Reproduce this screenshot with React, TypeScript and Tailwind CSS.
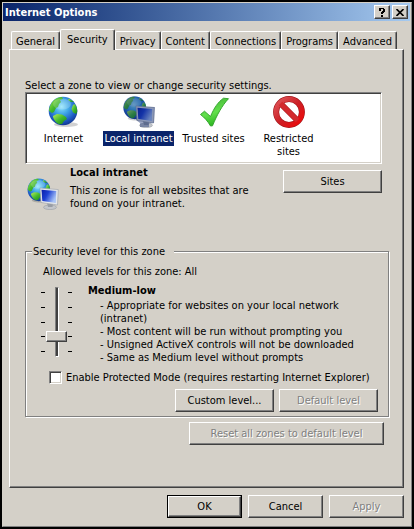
import { useState } from 'react';
import type { ButtonHTMLAttributes, ReactNode } from 'react';

const raised =
  'border border-t-white border-l-white border-r-[#404040] border-b-[#404040] shadow-[inset_-1px_-1px_0_#808080] bg-[#d4d0c8]';

function Button({
  className = '',
  primary = false,
  children,
  ...rest
}: ButtonHTMLAttributes<HTMLButtonElement> & { primary?: boolean; children: ReactNode }) {
  const face = `${raised} flex h-full w-full items-center justify-center`;
  return (
    <button
      type="button"
      className={`h-[23px] shrink-0 whitespace-nowrap disabled:text-[#808080] disabled:[text-shadow:1px_1px_0_#fff] ${
        primary ? 'border border-black' : ''
      } ${className}`}
      {...rest}
    >
      <span className={face}>{children}</span>
    </button>
  );
}

function Globe({ id }: { id: string }) {
  return (
    <g>
      <defs>
        <radialGradient id={`${id}-sea`} cx="0.45" cy="0.35" r="0.65">
          <stop offset="0" stopColor="#8fe4fb" />
          <stop offset="0.4" stopColor="#3fa6e6" />
          <stop offset="0.8" stopColor="#1c56c0" />
          <stop offset="1" stopColor="#123a94" />
        </radialGradient>
        <linearGradient id={`${id}-land`} x1="0" y1="0" x2="1" y2="1">
          <stop offset="0" stopColor="#b4ee5a" />
          <stop offset="0.5" stopColor="#43b92c" />
          <stop offset="1" stopColor="#15801c" />
        </linearGradient>
      </defs>
      <ellipse cx="18" cy="28.5" rx="12" ry="2.5" fill="#000" opacity="0.18" />
      <circle cx="15" cy="15" r="14.3" fill={`url(#${id}-sea)`} />
      <g fill={`url(#${id}-land)`}>
        <path d="M3 8 C6 3 10 1 14 1 L15 3 L12 4 L13 6 L11 8 L10 11 L8 12 L6 16 L4 17 L1 15 C1 12 2 10 3 8Z" />
        <path d="M5 20 L9 18 L14 18.5 L18 21 L19 23 L16 25 L14 28 L11 28.3 C8 27 6 24 5 21Z" />
        <path d="M25 9 L26.5 8 C28.5 10 29.5 13 29.2 16 L28 18 L25 16.5 L23.5 13Z" />
        <path d="M21 2.5 L26 6 L23 6 L20 4Z" />
      </g>
      <ellipse cx="14" cy="8" rx="9" ry="5.5" fill="#fff" opacity="0.2" />
    </g>
  );
}

function InternetIcon() {
  return (
    <svg width="32" height="32" viewBox="0 0 32 32" aria-hidden="true">
      <Globe id="net" />
    </svg>
  );
}

function IntranetIcon({ id, selected = false }: { id: string; selected?: boolean }) {
  return (
    <svg width="32" height="32" viewBox="0 0 32 32" aria-hidden="true">
      <defs>
        <linearGradient id={`${id}-screen`} x1="0" y1="0" x2="1" y2="0.5">
          <stop offset="0" stopColor="#0a1ea8" />
          <stop offset="0.45" stopColor="#1c3fd2" />
          <stop offset="1" stopColor="#a9c4f6" />
        </linearGradient>
        <mask id={`${id}-shape`}>
          <g fill="#fff">
            <circle cx="11.5" cy="11.5" r="11.3" />
            <path d="M13 10 L32 11 L31 27 L26 27.5 L26 31 L17 31 L17 27 L13 24Z" />
          </g>
        </mask>
      </defs>
      <g transform="scale(0.79)">
        <Globe id={id} />
      </g>
      <ellipse cx="23" cy="29.3" rx="6.5" ry="2.3" fill="#c3c6cb" stroke="#8e949c" strokeWidth="0.5" />
      <path d="M20 25 L26 26 L25.5 29 L21 29Z" fill="#989da5" />
      <path d="M13 10 L31.3 11.6 L30.5 27 L14 24.5Z" fill="#e4e7ea" stroke="#9aa0a8" strokeWidth="0.6" />
      <path d="M14.5 11.7 L29.3 13 L28.8 25 L15.3 23Z" fill={`url(#${id}-screen)`} />
      {selected && (
        <rect width="32" height="32" fill="#0a246a" opacity="0.4" mask={`url(#${id}-shape)`} />
      )}
    </svg>
  );
}

function TrustedIcon() {
  return (
    <svg width="32" height="32" viewBox="0 0 32 32" aria-hidden="true">
      <defs>
        <linearGradient id="tick" x1="0" y1="0" x2="0.3" y2="1">
          <stop offset="0" stopColor="#3fae35" />
          <stop offset="0.6" stopColor="#63e04c" />
          <stop offset="1" stopColor="#2fb723" />
        </linearGradient>
      </defs>
      <path
        d="M2.5 18.5 L6.5 15.2 L12.5 20.5 C16 12 20 6 25.5 2.2 L30.5 2.7 C24 9.5 19 19 14.5 29.8 L12.5 30 C10 25.5 6.5 21.5 2.5 18.5Z"
        fill="url(#tick)"
        stroke="#2c9f27"
        strokeWidth="0.9"
        strokeLinejoin="round"
      />
    </svg>
  );
}

function RestrictedIcon() {
  return (
    <svg width="32" height="32" viewBox="0 0 32 32" aria-hidden="true">
      <defs>
        <linearGradient id="stop" x1="0" y1="0" x2="1" y2="1">
          <stop offset="0" stopColor="#e0565a" />
          <stop offset="0.5" stopColor="#cc2026" />
          <stop offset="1" stopColor="#f00808" />
        </linearGradient>
      </defs>
      <g fill="none">
        <path d="M8 8 L24 24" stroke="#a3161a" strokeWidth="6" />
        <circle cx="16" cy="16" r="12.9" stroke="#a3161a" strokeWidth="6" />
        <circle cx="16" cy="16" r="12.9" stroke="url(#stop)" strokeWidth="4.8" />
        <path d="M7.5 7.5 L24.5 24.5" stroke="#d3292d" strokeWidth="4.8" />
      </g>
    </svg>
  );
}

const tabs = ['General', 'Security', 'Privacy', 'Content', 'Connections', 'Programs', 'Advanced'];

function Tabs() {
  return (
    <div role="tablist" className="flex items-end pr-[7px] pl-[2px]">
      {tabs.map((name) => {
        const active = name === 'Security';
        return (
          <button
            key={name}
            type="button"
            role="tab"
            aria-selected={active}
            className={`flex flex-auto justify-center rounded-t-[2px] border-t border-r border-l border-white border-r-[#404040] bg-[#d4d0c8] pt-[3px] shadow-[inset_-1px_0_0_#808080] ${
              active ? 'relative -mb-px h-[21px] px-[2px]' : 'h-[18px]'
            }`}
          >
            {name}
          </button>
        );
      })}
    </div>
  );
}

const zones = [
  { name: 'Internet', icon: <InternetIcon /> },
  { name: 'Local intranet', icon: <IntranetIcon id="zone" selected />, selected: true },
  { name: 'Trusted sites', icon: <TrustedIcon /> },
  { name: 'Restricted sites', icon: <RestrictedIcon /> },
];

function ZoneList() {
  return (
    <div
      role="listbox"
      aria-labelledby="zone-label"
      className="flex h-[72px] border border-t-[#808080] border-r-white border-b-white border-l-[#808080] bg-white pt-[3px] shadow-[inset_1px_1px_0_#404040,inset_-1px_-1px_0_#d4d0c8]"
    >
      {zones.map((zone) => (
        <div
          key={zone.name}
          role="option"
          aria-selected={!!zone.selected}
          className="flex w-[75px] flex-col items-center gap-[3px] text-center"
        >
          {zone.icon}
          <span
            className={
              zone.selected ? 'bg-[#0a246a] px-px py-px whitespace-nowrap text-white' : 'px-px py-px'
            }
          >
            {zone.name}
          </span>
        </div>
      ))}
    </div>
  );
}

function Ticks() {
  return (
    <div className="flex h-[60px] w-1 flex-col justify-between">
      {[0, 1, 2, 3, 4].map((n) => (
        <span key={n} className="h-px bg-black" />
      ))}
    </div>
  );
}

function LevelSlider() {
  const [level, setLevel] = useState(1);
  return (
    <div className="mt-[3px] flex w-[31px] shrink-0 items-center justify-between self-start">
      <Ticks />
      <div className="grid h-[70px] w-[21px] place-items-center">
        <span className="col-start-1 row-start-1 h-full w-1 border border-t-[#808080] border-r-white border-b-white border-l-[#808080] bg-[#404040]" />
        <input
          type="range"
          aria-label="Security level"
          min={0}
          max={4}
          value={level}
          onChange={(e) => setLevel(Number(e.target.value))}
          className="col-start-1 row-start-1 m-0 h-[70px] w-[21px] appearance-none bg-transparent [direction:rtl] [writing-mode:vertical-lr] [&::-webkit-slider-thumb]:h-[11px] [&::-webkit-slider-thumb]:w-[21px] [&::-webkit-slider-thumb]:appearance-none [&::-webkit-slider-thumb]:border [&::-webkit-slider-thumb]:border-t-white [&::-webkit-slider-thumb]:border-r-[#404040] [&::-webkit-slider-thumb]:border-b-[#404040] [&::-webkit-slider-thumb]:border-l-white [&::-webkit-slider-thumb]:bg-[#d4d0c8] [&::-webkit-slider-thumb]:shadow-[inset_-1px_-1px_0_#808080]"
        />
      </div>
      <Ticks />
    </div>
  );
}

const traits = [
  'Appropriate for websites on your local network (intranet)',
  'Most content will be run without prompting you',
  'Unsigned ActiveX controls will not be downloaded',
  'Same as Medium level without prompts',
];

function SecurityLevel() {
  return (
    <fieldset className="mt-[35px] -mr-[7px] h-[172px] min-w-0 border border-[#808080] pr-[10px] pl-[15px] shadow-[1px_1px_0_#fff,inset_1px_1px_0_#fff]">
      <legend className="-ml-[9px] bg-[#d4d0c8] pr-[9px] pl-px">Security level for this zone</legend>
      <p className="mt-[7px] pl-[2px]">Allowed levels for this zone: All</p>
      <div className="mt-[6px] flex gap-4">
        <LevelSlider />
        <div className="min-w-0">
          <h2 className="font-bold">Medium-low</h2>
          <ul className="mt-[2px] pl-3">
            {traits.map((trait) => (
              <li key={trait}>{`- ${trait}`}</li>
            ))}
          </ul>
        </div>
      </div>
      <label className="mt-[7px] flex items-center gap-1 pl-2 whitespace-nowrap">
        <input
          type="checkbox"
          className="size-[13px] appearance-none border border-t-[#808080] border-r-white border-b-white border-l-[#808080] bg-white shadow-[inset_1px_1px_0_#404040,inset_-1px_-1px_0_#d4d0c8]"
        />
        Enable Protected Mode (requires restarting Internet Explorer)
      </label>
      <div className="mt-[5px] flex justify-end gap-[5px]">
        <Button className="w-[99px]">Custom level...</Button>
        <Button className="w-[99px]" disabled>
          Default level
        </Button>
      </div>
    </fieldset>
  );
}

export default function App() {
  return (
    <div className="min-h-screen bg-black p-[2px] font-['DejaVu_Sans_Condensed','DejaVu_Sans',sans-serif] text-[11px] leading-[13px] text-black">
      <main className="border border-t-[#d4d0c8] border-r-[#808080] border-b-[#808080] border-l-[#d4d0c8] bg-[#d4d0c8] pr-px">
        <header className="flex h-[18px] items-center gap-[2px] bg-linear-to-r from-[#0a246a] to-[#a6caf0] px-[2px]">
          <h1 className="flex-1 font-bold text-white">Internet Options</h1>
          <button type="button" aria-label="Help" className={`${raised} flex h-[14px] w-4 items-center justify-center`}>
            <svg width="8" height="9" viewBox="0 0 8 9" shapeRendering="crispEdges" aria-hidden="true">
              <path d="M1 0H6V1H7V4H6V5H5V6H3V4H4V3H5V1H3V3H1V1Z M3 7H5V9H3Z" />
            </svg>
          </button>
          <button type="button" aria-label="Close" className={`${raised} flex h-[14px] w-4 items-center justify-center`}>
            <svg width="8" height="7" viewBox="0 0 8 7" stroke="#000" strokeWidth="1.6" aria-hidden="true">
              <path d="M0.5 0 L7.5 7 M7.5 0 L0.5 7" />
            </svg>
          </button>
        </header>
        <div className="px-[6px] pt-2 pb-2">
          <Tabs />
          <section className={`${raised} h-[439px] px-[15px] pt-[29px]`}>
            <p id="zone-label">Select a zone to view or change security settings.</p>
            <div className="pr-[6px]">
              <ZoneList />
              <div className="mt-[6px] flex items-start justify-between">
                <div className="flex gap-[11px]">
                  <div className="mt-2 ml-[2px]">
                    <IntranetIcon id="current" />
                  </div>
                  <div className="-mt-1">
                    <h2 className="font-bold">Local intranet</h2>
                    <p className="mt-[5px] w-[186px]">This zone is for all websites that are found on your intranet.</p>
                  </div>
                </div>
                <Button className="w-[99px]">Sites</Button>
              </div>
              <SecurityLevel />
            </div>
            <div className="mt-[5px] flex justify-end">
              <Button className="mr-1 w-[195px]" disabled>
                Reset all zones to default level
              </Button>
            </div>
          </section>
          <footer className="mt-[7px] flex justify-end gap-[6px]">
            <Button className="w-[75px]" primary>
              OK
            </Button>
            <Button className="w-[75px]">Cancel</Button>
            <Button className="w-[75px]" disabled>
              Apply
            </Button>
          </footer>
        </div>
      </main>
    </div>
  );
}
